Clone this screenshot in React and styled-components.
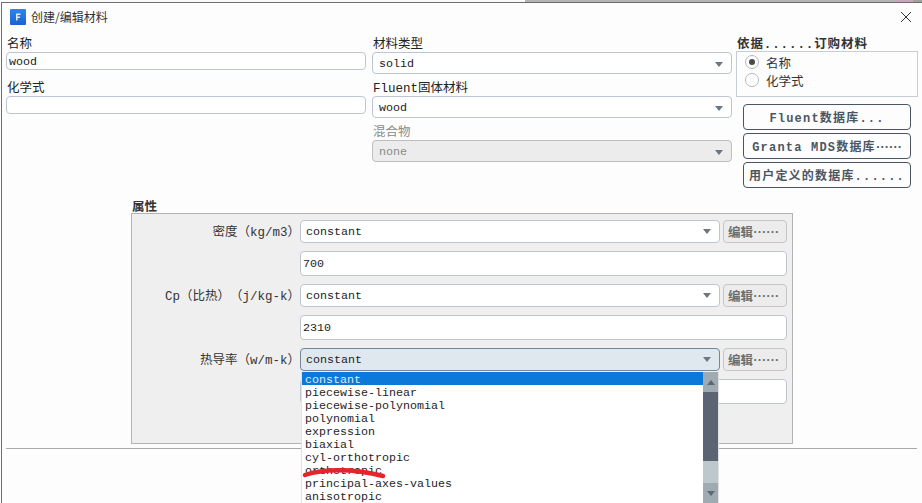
import React from "react";
import styled, { createGlobalStyle } from "styled-components";

const Global = createGlobalStyle`
  html, body { margin: 0; padding: 0; background: #fff; }
  body { width: 922px; height: 503px; overflow: hidden; font-family: "Liberation Mono", "Noto Sans CJK SC", monospace; font-size: 11.67px; color: #1e1e1e; text-spacing-trim: space-all; }
  * { box-sizing: border-box; }
`;
const Screen = styled.div`width: 922px; height: 503px; overflow: hidden; display: flex; flex-direction: column; background: #fff;`;
const BackStrip = styled.div`height: 2px; flex: none; display: flex;`;
const StripLight = styled.div`width: 525px; background: #fafafa;`;
const StripDark = styled.div`flex: 1; background: #b4b4b2;`;
const StripPink = styled.div`width: 18px; background: #c9a6bb;`;
const StripEnd = styled.div`width: 9px; background: #9fa39c;`;
const Dialog = styled.div`position: relative; flex: 1; margin-left: 1px; border-top: 1px solid #6d6d6d; border-left: 1px solid #6d6d6d; background: #fdfdfd; display: flex; flex-direction: column;`;
const TitleBar = styled.div`height: 30px; flex: none; display: flex; align-items: center; padding: 0 8px; gap: 5px; font-family: "Noto Sans CJK SC", sans-serif; font-size: 12px; color: #333;`;
const AppIcon = styled.svg`width: 16px; height: 16px; flex: none; margin-top: -2px;`;
const Title = styled.span`flex: 1; margin-top: -3px;`;
const Close = styled.svg`width: 12px; height: 12px; flex: none; margin-right: 2px; margin-top: -2px;`;
const Top = styled.div`display: grid; grid-template-columns: 360px 360px 182px; column-gap: 6px; padding: 0 0 0 4px; height: 162px; flex: none;`;
const Col = styled.div`display: flex; flex-direction: column;`;
const RightCol = styled(Col)`margin-left: -2px; width: 182px;`;
const Label = styled.div`height: 19px; line-height: 25px; padding-left: 1px; font-size: 12.5px; color: ${p => p.$muted ? "#8a8a8a" : "#222"}; white-space: nowrap;`;
const Spaced = styled.div`height: ${p => p.$h}px; flex: none;`;
const TextBox = styled.div`height: 18px; flex: none; border: 1px solid #bcc6d2; border-radius: 4px; background: #fff; display: flex; align-items: center; padding: 1px 0 0 2px; font-size: 11.67px; color: #222;`;
const SelectBox = styled.div`height: ${p => p.$h || 22}px; flex: none; border: 1px solid ${p => p.$focus ? "#75859b" : p.$off ? "#bdbdbd" : "#bcc6d2"}; border-radius: 4px; background: ${p => p.$focus ? "#dfe7ef" : p.$off ? "#ececec" : "#fff"}; color: ${p => p.$off ? "#8a8a8a" : "#222"}; display: flex; align-items: center; justify-content: space-between; padding: ${p => p.$h ? "0 6px 0 5px" : "2px 6px 0 6px"}; font-size: 11.67px;`;
const Caret = styled.span`width: 0; height: 0; margin-right: 2px; border-left: 4.5px solid transparent; border-right: 4.5px solid transparent; border-top: 5px solid #6b7683;`;
const GroupTitle = styled.div`height: 18px; line-height: 24px; padding-left: 1px; font-weight: 700; font-size: 12.5px; letter-spacing: 0.9px; color: #333; white-space: nowrap;`;
const RadioBox = styled.div`height: 46px; border: 1px solid #c5ced8; padding: 1px 0 0 8px; display: flex; flex-direction: column; flex: none;`;
const RadioRow = styled.div`height: 18px; display: flex; align-items: center; gap: 7px; font-size: 12.5px; color: #333;`;
const RadioDot = styled.span`width: 14px; height: 14px; border-radius: 50%; border: 1px solid #b4b8bd; background: #fff; display: flex; align-items: center; justify-content: center; &::after { content: ""; width: 6px; height: 6px; border-radius: 50%; background: ${p => p.$on ? "#4a4a4e" : "transparent"}; }`;
const DbButtons = styled.div`display: flex; flex-direction: column; gap: 3px; padding: 7px 7px 0;`;
const DbButton = styled.div`height: 26px; border: 1px solid #4a5563; border-radius: 4px; background: #fdfdfd; display: flex; align-items: center; justify-content: center; white-space: nowrap; font-weight: 700; font-size: 12px; letter-spacing: 1.2px; color: #4c5662; overflow: hidden;`;
const Dots = styled.span`font-family: "Noto Sans CJK SC", sans-serif; font-size: 13px; letter-spacing: 0;`;
const Props = styled.div`padding-left: 129px; width: 791px; flex: none;`;
const PropsTitle = styled.div`height: 18px; line-height: 26px; padding-left: 1px; font-weight: 700; font-size: 12.5px; color: #333;`;
const Panel = styled.div`height: 231px; border: 1px solid #b3b3b3; background: #efefef; padding: 6px 4px 0 168px; display: grid; grid-template-columns: 420px 64px; column-gap: 3px; grid-auto-rows: min-content;`;
const RowLabel = styled.div`position: absolute; right: 100%; top: 0; width: 165px; height: 23px; line-height: 26px; text-align: right; white-space: nowrap; font-size: 12.5px; color: #333;`;
const SelectCell = styled.div`position: relative;`;
const EditButton = styled.div`height: 23px; border: 1px solid #c6c6c6; border-radius: 4px; background: #ececec; color: #6e6e6e; font-weight: 700; font-size: 12.5px; display: flex; align-items: center; padding-left: 4px; white-space: nowrap; overflow: hidden;`;
const ValueCell = styled.div`grid-column: 1 / 3; margin: 8px 0;`;
const Value = styled.div`height: 25px; border: 1px solid #bcc6d2; border-radius: 4px; background: #fff; display: flex; align-items: center; padding: 1px 0 0 2px; font-size: 11.67px; color: #222;`;
const Separator = styled.div`height: 1px; background: #a9a9a9; margin: 4px 5px 0 4px; flex: none;`;
const Popup = styled.div`position: absolute; left: 299px; top: 369px; width: 418px; height: 132px; background: #fff; border: 1px solid #e2e2e2; border-top: 0; display: flex;`;
const List = styled.div`flex: 1; display: flex; flex-direction: column; min-width: 0;`;
const Item = styled.div`height: 13px; line-height: 16px; padding-left: 3px; font-size: 11.67px; white-space: nowrap; background: ${p => p.$on ? "#0c78d8" : "transparent"}; color: ${p => p.$on ? "#d8ecff" : "#1e1e1e"};`;
const Scroll = styled.div`width: 15px; flex: none; display: flex; flex-direction: column; background: #bdc8cd;`;
const ScrollCap = styled.div`height: 20px; background: #9eabb3; display: flex; align-items: center; justify-content: center; flex: none;`;
const Thumb = styled.div`height: 69px; background: #5b6473; flex: none;`;
const Track = styled.div`flex: 1;`;
const Tri = styled.span`width: 0; height: 0; border-left: 4px solid transparent; border-right: 4px solid transparent; ${p => p.$up ? "border-bottom: 5px solid #5c6873;" : "border-top: 5px solid #5c6873;"}`;
const Scribble = styled.svg`position: absolute; left: 300px; top: 462px; width: 90px; height: 16px; pointer-events: none;`;

const props = [
  ["密度（kg/m3）", "700", false],
  ["Cp（比热）（j/kg-k）", "2310", false],
  ["热导率（w/m-k）", "", true],
];
const options = ["constant", "piecewise-linear", "piecewise-polynomial", "polynomial", "expression", "biaxial", "cyl-orthotropic", "orthotropic", "principal-axes-values", "anisotropic"];

export default function App() {
  return (
    <Screen>
      <Global />
      <BackStrip><StripLight /><StripDark /><StripPink /><StripEnd /></BackStrip>
      <Dialog>
        <TitleBar>
          <AppIcon viewBox="0 0 16 16">
            <defs>
              <linearGradient id="appIconFill" x1="0" y1="0" x2="0" y2="1">
                <stop offset="0" stopColor="#2f86e8" />
                <stop offset="1" stopColor="#1a62d0" />
              </linearGradient>
            </defs>
            <rect width="16" height="16" rx="1" fill="url(#appIconFill)" />
            <path d="M6 4.5 H10.5 V6 H7.5 V7.5 H10 V9 H7.5 V11.5 H6 Z" fill="#dfe9f8" />
          </AppIcon>
          <Title>创建/编辑材料</Title>
          <Close viewBox="0 0 12 12"><path d="M1 1 L11 11 M11 1 L1 11" stroke="#333" strokeWidth="1" fill="none" /></Close>
        </TitleBar>
        <Top>
          <Col>
            <Label>名称</Label>
            <TextBox>wood</TextBox>
            <Spaced $h={7} />
            <Label>化学式</Label>
            <TextBox />
          </Col>
          <Col>
            <Label>材料类型</Label>
            <SelectBox>solid<Caret /></SelectBox>
            <Spaced $h={3} />
            <Label>Fluent固体材料</Label>
            <SelectBox>wood<Caret /></SelectBox>
            <Spaced $h={3} />
            <Label $muted>混合物</Label>
            <SelectBox $off>none<Caret /></SelectBox>
          </Col>
          <RightCol>
            <GroupTitle>依据......订购材料</GroupTitle>
            <RadioBox>
              <RadioRow><RadioDot $on />名称</RadioRow>
              <RadioRow><RadioDot />化学式</RadioRow>
            </RadioBox>
            <DbButtons>
              <DbButton>Fluent数据库...</DbButton>
              <DbButton>Granta MDS数据库<Dots>……</Dots></DbButton>
              <DbButton>用户定义的数据库......</DbButton>
            </DbButtons>
          </RightCol>
        </Top>
        <Props>
          <PropsTitle>属性</PropsTitle>
          <Panel>
            {props.map(([label, value, focus]) => (
              <React.Fragment key={label}>
                <SelectCell>
                  <RowLabel>{label}</RowLabel>
                  <SelectBox $h={23} $focus={focus}>constant<Caret /></SelectBox>
                </SelectCell>
                <EditButton>编辑<Dots>……</Dots></EditButton>
                <ValueCell><Value>{value}</Value></ValueCell>
              </React.Fragment>
            ))}
          </Panel>
        </Props>
        <Separator />
        <Popup>
          <List>
            {options.map((o, i) => <Item key={o} $on={i === 0}>{o}</Item>)}
          </List>
          <Scroll>
            <ScrollCap><Tri $up /></ScrollCap>
            <Thumb />
            <Track />
            <ScrollCap><Tri /></ScrollCap>
          </Scroll>
        </Popup>
        <Scribble viewBox="0 0 90 16">
          <path d="M3 10 C 20 4, 50 3, 81 11" stroke="#e8232a" strokeWidth="4.5" fill="none" strokeLinecap="round" />
        </Scribble>
      </Dialog>
    </Screen>
  );
}
